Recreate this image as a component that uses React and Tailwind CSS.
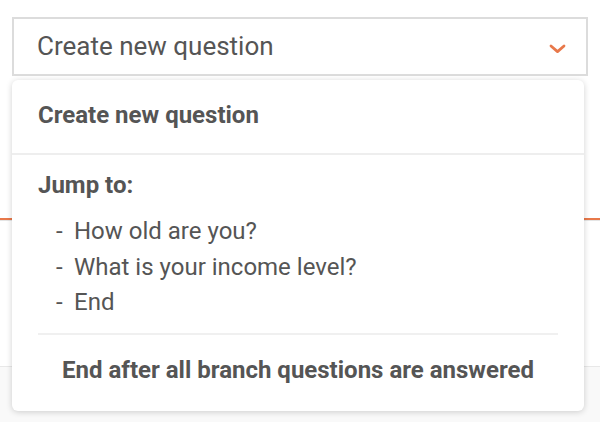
export default function App() {
  return (
    <div className="relative flex h-[422px] w-[600px] flex-col overflow-hidden bg-white" style={{ fontFamily: "Roboto, 'Liberation Sans', sans-serif" }}>
      <div className="mx-3 mt-[17px] flex h-[59px] items-center justify-between border-2 border-[#dcdcdc] pl-[23px] pr-[20px]">
        <span className="text-[26px] text-[#555]">Create new question</span>
        <svg className="mt-[4px]" width="17" height="10" viewBox="0 0 17 10" fill="none">
          <path d="M2 2l6.5 5.6 6.5-5.6" stroke="#e8784a" strokeWidth="2.8" strokeLinecap="round" strokeLinejoin="round" />
        </svg>
      </div>
      <div className="mt-[142px] h-[2px] bg-[#e8784a]" />
      <div className="h-[1px] bg-[#e5e5e5]" />
      <div className="mt-[145px] flex-1 border-t border-[#e8e8e8] bg-[#f9f9f9]" />

      <div className="absolute left-3 top-[80px] w-[572px] rounded-md bg-white shadow-[0_1px_6px_rgba(0,0,0,0.18)]">
        <div className="flex h-[73px] items-center px-[26px] pb-[3px] text-[24px] font-bold text-[#555]">Create new question</div>
        <div className="h-[2px] bg-[#eeeeee]" />
        <div className="px-[26px] pt-[14px]">
          <div className="text-[24px] font-bold leading-[32px] text-[#555]">Jump to:</div>
          <div className="mt-[13px] flex flex-col pl-[18px] text-[24px] leading-[35.5px] text-[#555]">
            <div className="flex"><span className="w-[18px]">-</span><span>How old are you?</span></div>
            <div className="flex"><span className="w-[18px]">-</span><span>What is your income level?</span></div>
            <div className="flex"><span className="w-[18px]">-</span><span>End</span></div>
          </div>
          <div className="mt-[12px] h-[2px] bg-[#f0f0f0]" />
          <div className="flex h-[76px] items-center justify-center pb-[6px] text-[24px] font-bold text-[#555]">End after all branch questions are answered</div>
        </div>
      </div>
    </div>
  );
}
